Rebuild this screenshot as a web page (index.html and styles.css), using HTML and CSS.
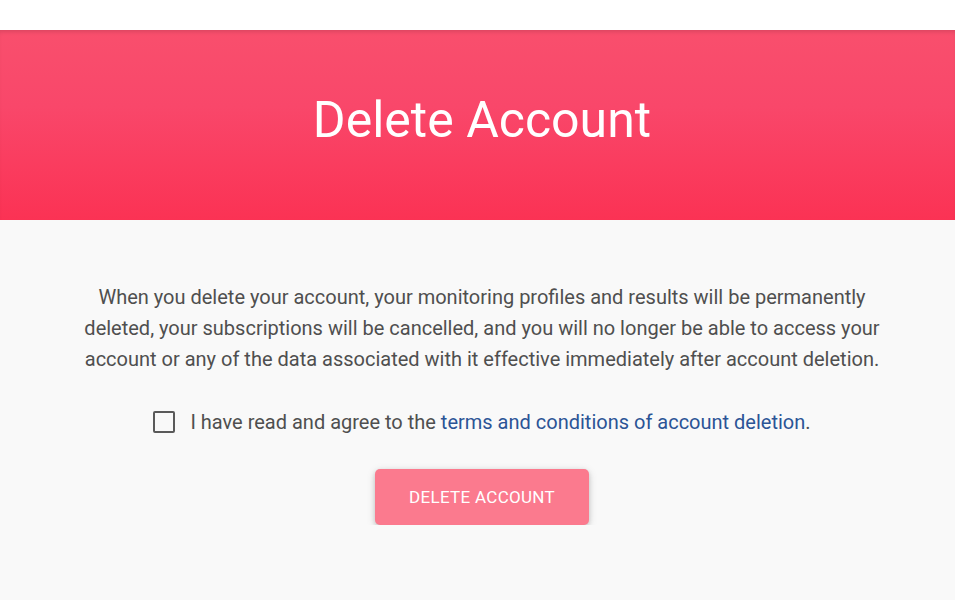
FILE: index.html
```html
<!DOCTYPE html>
<html lang="en">
<head>
    <meta charset="UTF-8">
    <meta name="viewport" content="width=device-width, initial-scale=1.0">
    <title>Delete Account</title>
    <link rel="stylesheet" href="styles.css">
</head>
<body>

    <div class="topbar"></div>

    <header class="hero">
        <h1>Delete Account</h1>
    </header>

    <main class="content">
        <p class="notice">
            When you delete your account, your monitoring profiles and results will be permanently
            deleted, your subscriptions will be cancelled, and you will no longer be able to access your
            account or any of the data associated with it effective immediately after account deletion.
        </p>

        <label class="agree">
            <input type="checkbox" id="agree">
            <span class="box"></span>
            <span>I have read and agree to the <a href="#">terms and conditions of account deletion</a>.</span>
        </label>

        <div class="actions">
            <button class="btn-delete" disabled>Delete Account</button>
        </div>
    </main>

</body>
</html>
```

FILE: styles.css
```css
body {
    margin: 0;
    font-family: Roboto, 'Liberation Sans', sans-serif;
    background-color: #f9f9f9;
    color: #4f4f4f;
}

.topbar {
    height: 30px;
    background-color: #ffffff;
}

.hero {
    height: 190px;
    display: flex;
    align-items: center;
    justify-content: center;
    padding-left: 9px;
    background: linear-gradient(to bottom, #f94f6d 0%, #f9476a 40%, #fb3254 100%);
    box-shadow: inset 0 4px 4px -2px rgba(0, 0, 0, 0.12);
}

.hero h1 {
    margin: 0;
    font-size: 50px;
    font-weight: 400;
    color: #ffffff;
    padding-bottom: 10px;
}

.content {
    padding-top: 62px;
    padding-left: 9px;
    text-align: center;
}

.notice {
    max-width: 800px;
    margin: 0 auto;
    font-size: 20px;
    line-height: 31px;
    color: #4f4f4f;
}

.agree {
    display: flex;
    align-items: center;
    justify-content: center;
    gap: 15px;
    margin-top: 35px;
    font-size: 20px;
    color: #4f4f4f;
    cursor: pointer;
}

.agree input {
    display: none;
}

.agree .box {
    width: 18px;
    height: 18px;
    border: 2px solid #5a5a5a;
    border-radius: 2px;
}

.agree a {
    color: #2b5496;
    text-decoration: none;
}

.actions {
    display: flex;
    justify-content: center;
    margin-top: 35px;
}

.btn-delete {
    width: 214px;
    height: 56px;
    border: none;
    border-radius: 5px;
    background-color: #fb7a8e;
    color: #ffffff;
    font-family: Roboto, 'Liberation Sans', sans-serif;
    font-size: 17px;
    letter-spacing: 0.3px;
    text-transform: uppercase;
    box-shadow: 0 2px 5px rgba(0, 0, 0, 0.16), 0 2px 10px rgba(0, 0, 0, 0.12);
}
```
